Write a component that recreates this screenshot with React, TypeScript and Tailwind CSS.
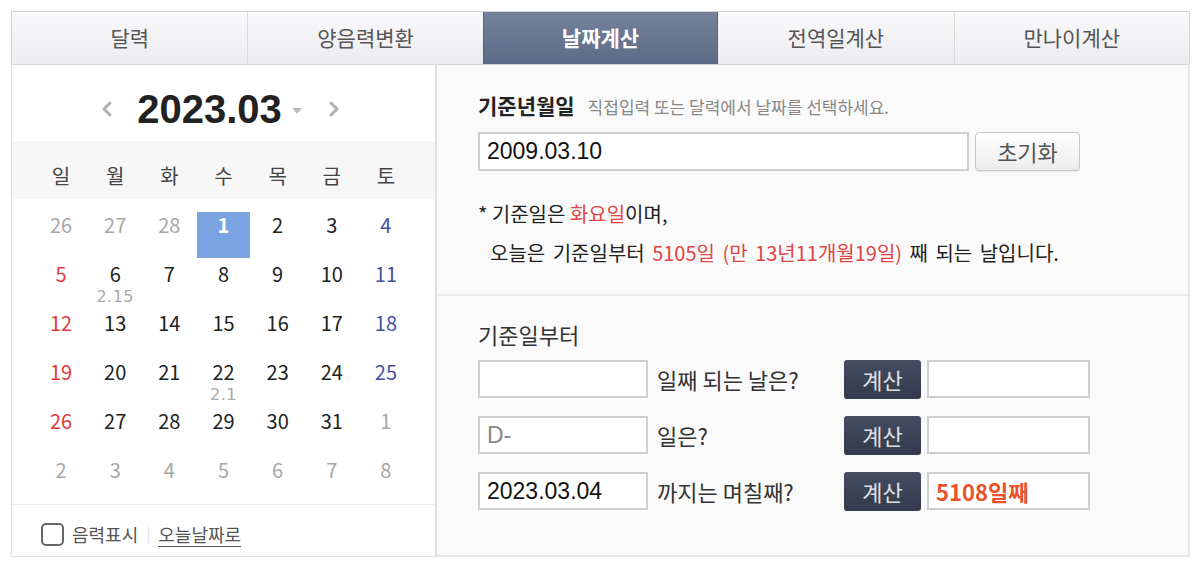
import React from "react";

const tabs = ["달력", "양음력변환", "날짜계산", "전역일계산", "만나이계산"];
const weekdays = ["일", "월", "화", "수", "목", "금", "토"];

type Cell = { d: string; kind: "gray" | "sun" | "sat" | "normal" | "sel"; sub?: string };

const rows: Cell[][] = [
  [
    { d: "26", kind: "gray" },
    { d: "27", kind: "gray" },
    { d: "28", kind: "gray" },
    { d: "1", kind: "sel" },
    { d: "2", kind: "normal" },
    { d: "3", kind: "normal" },
    { d: "4", kind: "sat" },
  ],
  [
    { d: "5", kind: "sun" },
    { d: "6", kind: "normal", sub: "2.15" },
    { d: "7", kind: "normal" },
    { d: "8", kind: "normal" },
    { d: "9", kind: "normal" },
    { d: "10", kind: "normal" },
    { d: "11", kind: "sat" },
  ],
  [
    { d: "12", kind: "sun" },
    { d: "13", kind: "normal" },
    { d: "14", kind: "normal" },
    { d: "15", kind: "normal" },
    { d: "16", kind: "normal" },
    { d: "17", kind: "normal" },
    { d: "18", kind: "sat" },
  ],
  [
    { d: "19", kind: "sun" },
    { d: "20", kind: "normal" },
    { d: "21", kind: "normal" },
    { d: "22", kind: "normal", sub: "2.1" },
    { d: "23", kind: "normal" },
    { d: "24", kind: "normal" },
    { d: "25", kind: "sat" },
  ],
  [
    { d: "26", kind: "sun" },
    { d: "27", kind: "normal" },
    { d: "28", kind: "normal" },
    { d: "29", kind: "normal" },
    { d: "30", kind: "normal" },
    { d: "31", kind: "normal" },
    { d: "1", kind: "gray" },
  ],
  [
    { d: "2", kind: "gray" },
    { d: "3", kind: "gray" },
    { d: "4", kind: "gray" },
    { d: "5", kind: "gray" },
    { d: "6", kind: "gray" },
    { d: "7", kind: "gray" },
    { d: "8", kind: "gray" },
  ],
];

const colorFor = (k: Cell["kind"]) => {
  switch (k) {
    case "gray":
      return "text-[#a8a8a8]";
    case "sun":
      return "text-[#e03a3a]";
    case "sat":
      return "text-[#4650a0]";
    case "sel":
      return "text-white font-bold";
    default:
      return "text-[#222]";
  }
};

const FONT = "font-['Noto_Sans_CJK_KR','Noto_Sans',sans-serif]";

function Chevron({ dir }: { dir: "left" | "right" }) {
  return (
    <svg width="12" height="16" viewBox="0 0 12 16" className="shrink-0">
      <path
        d={dir === "left" ? "M9 2 L3 8 L9 14" : "M3 2 L9 8 L3 14"}
        fill="none"
        stroke="#b0b0b0"
        strokeWidth="3"
        strokeLinecap="round"
        strokeLinejoin="round"
      />
    </svg>
  );
}

export default function App() {
  return (
    <div className={`w-[1200px] h-[570px] bg-white pt-[11px] px-[11px] ${FONT}`}>
      <div className="w-[1179px]">
        {/* Tabs */}
        <div className="grid grid-cols-5 h-[54px] border border-[#d6d6d6]">
          {tabs.map((t, i) => {
            const active = i === 2;
            return (
              <div
                key={t}
                className={
                  active
                    ? "flex items-center justify-center bg-gradient-to-b from-[#74829c] to-[#5d6b86] border-x border-[#56627a] text-white text-[21px] font-bold"
                    : `flex items-center justify-center bg-gradient-to-b from-[#f9f9fb] to-[#ececf0] text-[#555] text-[21px] ${
                        i > 0 && i !== 3 ? "border-l border-[#d9d9d9]" : ""
                      }`
                }
              >
                {t}
              </div>
            );
          })}
        </div>

        <div className="flex h-[492px]">
          {/* Left calendar */}
          <div className="w-[426px] border-l border-r-2 border-b border-[#e0e0e0] flex flex-col">
            <div className="h-[78px] border-b border-[#ececec] flex items-center justify-center pt-[10px] pr-[6px]">
              <Chevron dir="left" />
              <span className="ml-[24px] text-[40px] font-bold text-[#222] font-['Liberation_Sans',sans-serif] leading-none">
                2023.03
              </span>
              <svg width="10" height="6" viewBox="0 0 10 6" className="ml-[10px] mt-[4px]">
                <path d="M0 0 L10 0 L5 6 Z" fill="#bdbdbd" />
              </svg>
              <span className="ml-[26px]">
                <Chevron dir="right" />
              </span>
            </div>
            <div className="h-[56px] bg-[#f7f7f7] grid grid-cols-7 px-[22px] items-center pt-[10px]">
              {weekdays.map((w) => (
                <div key={w} className="text-center text-[20px] text-[#444]">
                  {w}
                </div>
              ))}
            </div>
            <div className="flex-1 pt-[13px] px-[22px] flex flex-col gap-[3px]">
              {rows.map((r, ri) => (
                <div key={ri} className="grid grid-cols-7 h-[46px]">
                  {r.map((c, ci) => (
                    <div
                      key={ci}
                      className={`flex flex-col items-center ${c.kind === "sel" ? "bg-[#7aa3e2] mx-[1px]" : ""}`}
                    >
                      <span className={`text-[20px] leading-[25px] ${colorFor(c.kind)}`}>{c.d}</span>
                      {c.sub && (
                        <span className="text-[16px] leading-[14px] mt-[4px] text-[#aaa] font-['DejaVu_Sans',sans-serif] tracking-[0.5px]">
                          {c.sub}
                        </span>
                      )}
                    </div>
                  ))}
                </div>
              ))}
            </div>
            <div className="h-[52px] border-t border-[#ececec] flex items-center pl-[29px] pt-[7px]">
              <span className="w-[23px] h-[23px] border-2 border-[#666] rounded-[5px] mr-[8px]" />
              <span className="text-[18px] text-[#555]">음력표시</span>
              <span className="mx-[8px] text-[#ddd] text-[15px]">|</span>
              <span className="text-[18px] text-[#555] underline underline-offset-[4px]">오늘날짜로</span>
            </div>
          </div>

          {/* Right panel */}
          <div className="flex-1 bg-[#fafafa] border-r-2 border-b-2 border-[#e6e6e6] flex flex-col">
            <div className="h-[231px] border-b-2 border-[#eaeaea] pl-[41px] pt-[25px]">
              <div className="flex items-baseline">
                <span className="text-[21px] font-bold text-[#222]">기준년월일</span>
                <span className="text-[17px] text-[#888] ml-[13px]">직접입력 또는 달력에서 날짜를 선택하세요.</span>
              </div>
              <div className="flex mt-[10px]">
                <div className="w-[491px] h-[39px] border-2 border-[#cfcfcf] bg-white flex items-center pl-[7px] text-[23px] text-[#111] font-['Liberation_Sans',sans-serif]">
                  2009.03.10
                </div>
                <div className="ml-[6px] w-[105px] h-[39px] border border-[#c6c6c6] rounded-[4px] bg-gradient-to-b from-white to-[#ececec] flex items-center justify-center text-[22px] text-[#555] shadow-[0_1px_1px_rgba(0,0,0,0.08)]">
                  초기화
                </div>
              </div>
              <div className="mt-[23px] text-[20px] text-[#222] leading-[39px]">
                <div>
                  * 기준일은 <span className="text-[#e04545]">화요일</span>이며,
                </div>
                <div className="pl-[12px] [word-spacing:3px]">
                  오늘은 기준일부터{" "}
                  <span className="text-[#e04545]">5105일 (만 13년11개월19일)</span> 째 되는 날입니다.
                </div>
              </div>
            </div>
            <div className="flex-1 pl-[41px] pt-[23px]">
              <div className="text-[22px] text-[#333] leading-[30px]">기준일부터</div>
              <div className="flex flex-col gap-[18px] mt-[11px]">
                {[
                  { v: "", ph: "", label: "일째 되는 날은?", res: "" },
                  { v: "", ph: "D-", label: "일은?", res: "" },
                  { v: "2023.03.04", ph: "", label: "까지는 며칠째?", res: "5108일째" },
                ].map((r, i) => (
                  <div key={i} className="flex items-center h-[38px]">
                    <div className="w-[170px] h-[38px] border-2 border-[#cfcfcf] bg-white flex items-center pl-[7px] text-[23px] font-['Liberation_Sans',sans-serif]">
                      {r.v ? (
                        <span className="text-[#111]">{r.v}</span>
                      ) : (
                        <span className="text-[#888]">{r.ph}</span>
                      )}
                    </div>
                    <span className="w-[196px] pl-[9px] text-[22px] text-[#333]">{r.label}</span>
                    <div className="w-[77px] h-[39px] rounded-[3px] bg-gradient-to-b from-[#454d62] to-[#333a4d] flex items-center justify-center text-[22px] text-[#e0e0e0]">
                      계산
                    </div>
                    <div className="ml-[6px] w-[163px] h-[38px] border-2 border-[#cfcfcf] bg-white flex items-center pl-[7px] text-[22px] font-bold text-[#e8522b]">
                      {r.res}
                    </div>
                  </div>
                ))}
              </div>
            </div>
          </div>
        </div>
      </div>
    </div>
  );
}
